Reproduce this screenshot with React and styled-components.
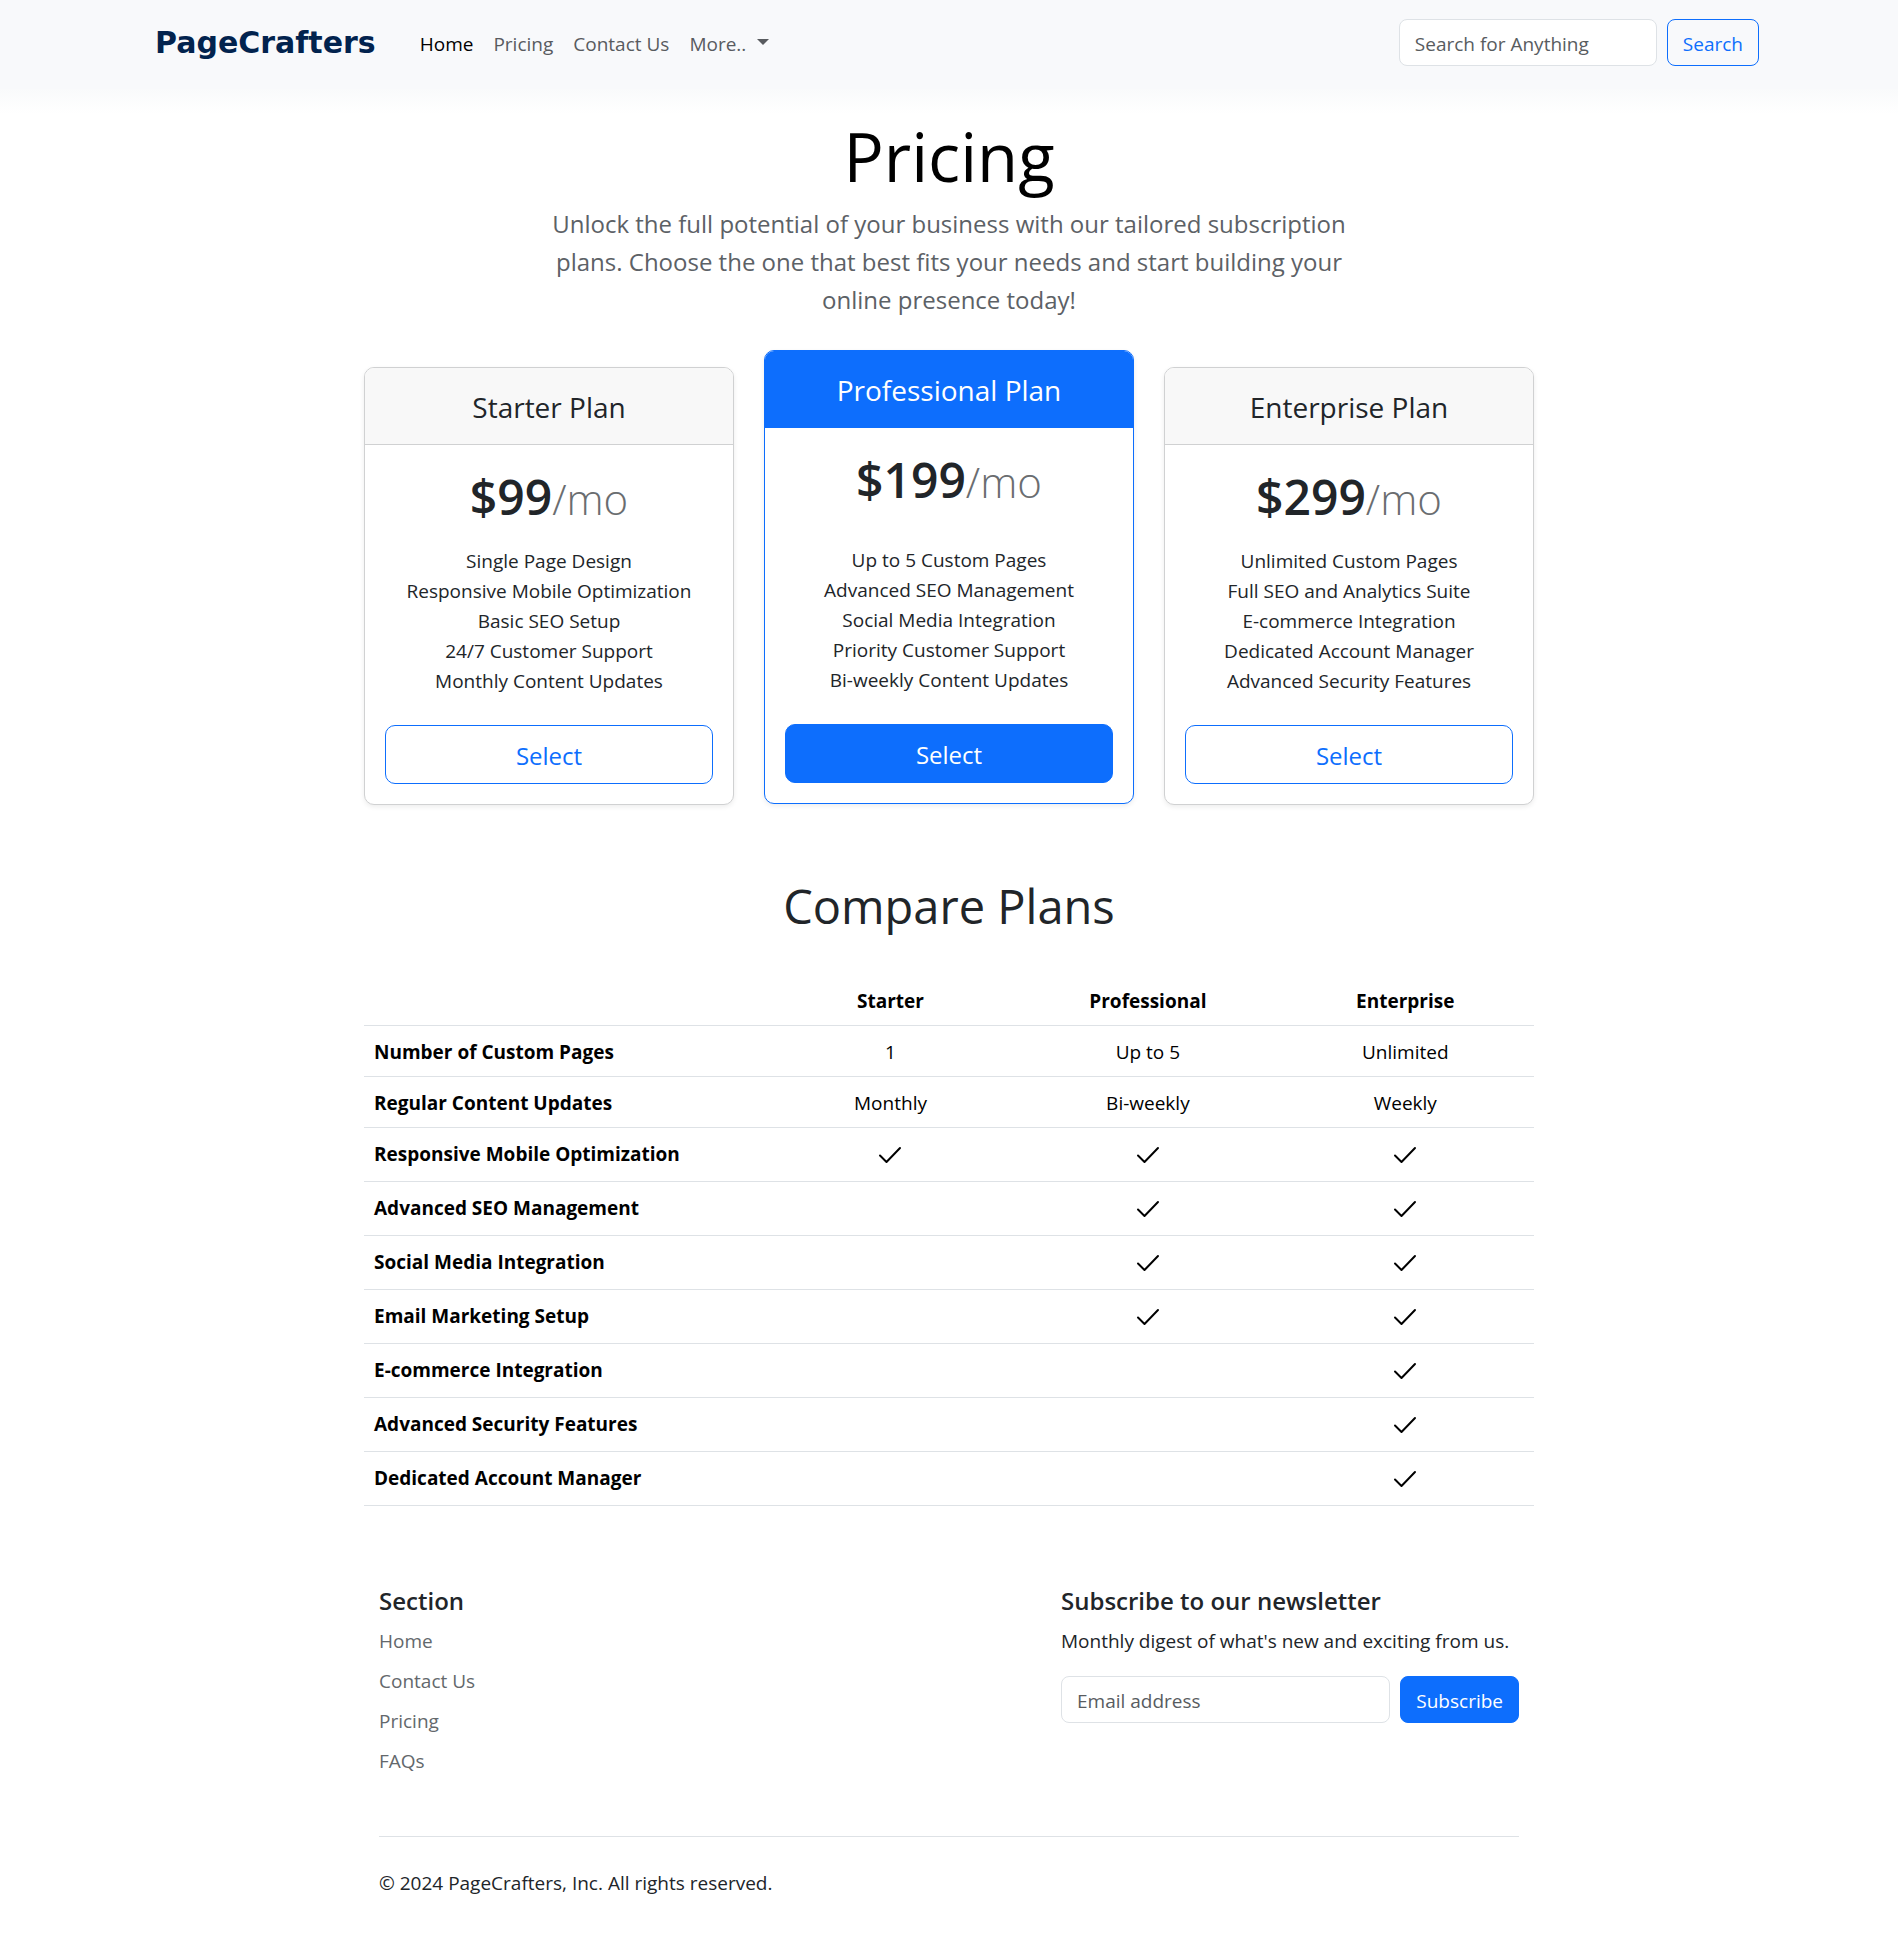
import React from "react";
import styled, { createGlobalStyle, css } from "styled-components";

const color = {
  blue: "#0d6efd",
  body: "#212529",
  muted: "#585c5f",
  line: "#dee2e6",
  cardLine: "#d0d1d2",
};

const GlobalStyle = createGlobalStyle`
  *, *::before, *::after { box-sizing: border-box; }
  body {
    margin: 0;
    background: #fff;
    color: ${color.body};
    font-family: "Segoe UI", "Open Sans", "Noto Sans", sans-serif;
    font-size: 19px;
    line-height: 30px;
  }
  h1, h2, h3, h4, h5, p, ul { margin: 0; padding: 0; }
  ul { list-style: none; }
  a { color: inherit; text-decoration: none; }
`;

const Navbar = styled.header`
  height: 89px;
  background: #f8f9fb;
`;

const NavInner = styled.nav`
  display: flex;
  align-items: flex-start;
  max-width: 1650px;
  margin: 0 auto;
  padding: 19px 15px 0;
`;

const Brand = styled.a`
  padding: 0 34px 0 16px;
  color: #02234e;
  font: bold 30px/48px "DejaVu Sans", sans-serif;
`;

const NavList = styled.ul`
  display: flex;
  flex: 1;
`;

const NavLink = styled.a`
  display: flex;
  align-items: center;
  padding: 10px;
  line-height: 30px;
  color: ${(p) => (p.$active ? "#000" : "#585b5f")};
`;

const Caret = styled.span`
  margin: 0 0 5px 11px;
  border-top: 6px solid;
  border-left: 6px solid transparent;
  border-right: 6px solid transparent;
`;

const InlineForm = styled.form`
  display: flex;
  gap: 10px;
`;

const TextField = styled.input`
  flex: 1;
  width: ${(p) => p.$width || "auto"};
  min-width: 0;
  height: 47px;
  padding: 2px 15px 0;
  border: 1px solid ${color.line};
  border-radius: 8px;
  background: #fff;
  color: ${color.body};
  font: inherit;
  &::placeholder { color: ${color.muted}; opacity: 1; }
`;

const Button = styled.button`
  padding: 2px 15px 0;
  height: 47px;
  border: 1px solid ${color.blue};
  border-radius: 8px;
  background: ${(p) => (p.$solid ? color.blue : "transparent")};
  color: ${(p) => (p.$solid ? "#fff" : color.blue)};
  font: inherit;
  cursor: pointer;
  ${(p) =>
    p.$large &&
    css`
      width: 100%;
      height: 59px;
      border-radius: 10px;
      font-size: 24px;
    `}
`;

const Fade = styled.div`
  height: 25px;
  background: linear-gradient(#f9fafb, #fff);
`;

const Container = styled.div`
  max-width: 1200px;
  margin: 0 auto;
  padding: 0 15px;
`;

const Intro = styled.section`
  display: flex;
  flex-direction: column;
  align-items: center;
  gap: 7px;
  padding-bottom: 48px;
  text-align: center;
`;

const PageTitle = styled.h1`
  color: #000;
  font-size: 67px;
  font-weight: 400;
  line-height: 84px;
`;

const Lead = styled.p`
  max-width: 820px;
  color: #5c6166;
  font-size: 24px;
  line-height: 38px;
`;

const Cards = styled.section`
  display: grid;
  grid-template-columns: repeat(3, 1fr);
  gap: 30px;
`;

const Card = styled.article`
  display: flex;
  flex-direction: column;
  overflow: hidden;
  border: 1px solid ${(p) => (p.$featured ? color.blue : color.cardLine)};
  border-radius: 10px;
  background: #fff;
  box-shadow: 0 2px 5px rgba(0, 0, 0, 0.075);
  text-align: center;
  ${(p) => p.$featured && "margin: -17px 0 1px;"}
`;

const CardHeader = styled.header`
  padding: 21px 20px 19px;
  border-bottom: 1px solid ${(p) => (p.$featured ? color.blue : color.cardLine)};
  background: ${(p) => (p.$featured ? color.blue : "#f8f8f8")};
  color: ${(p) => (p.$featured ? "#fff" : "inherit")};
`;

const PlanName = styled.h4`
  font-size: 28px;
  font-weight: 400;
  line-height: 36px;
`;

const CardBody = styled.div`
  display: flex;
  flex: 1;
  flex-direction: column;
  padding: 22px 20px 20px;
`;

const Price = styled.p`
  font-size: 48px;
  font-weight: 600;
  line-height: 60px;
  small {
    color: #6a6d70;
    font-size: 42px;
    font-weight: 300;
    line-height: 1;
  }
`;

const Features = styled.ul`
  margin: auto 0 29px;
  padding-top: 19px;
`;

const SectionTitle = styled.h2`
  margin: 71px 0 39px;
  font-size: 47px;
  font-weight: 400;
  line-height: 60px;
  text-align: center;
`;

const Table = styled.table`
  width: 100%;
  border-collapse: collapse;
  table-layout: fixed;
  color: #000;
  text-align: center;
`;

const HeadCell = styled.th`
  width: ${(p) => p.$width};
  padding: 11px 10px 9px;
  border-bottom: 1px solid ${color.line};
  font-weight: 700;
`;

const RowHead = styled(HeadCell)`
  text-align: left;
  vertical-align: top;
`;

const Cell = styled.td`
  padding: 11px 10px 9px;
  border-bottom: 1px solid ${color.line};
  vertical-align: top;
`;

const CheckIcon = styled.svg`
  display: block;
  width: 30px;
  height: 33px;
  margin: 0 auto;
`;

const Footer = styled.footer`
  padding: 80px 15px 45px;
`;

const FooterTop = styled.div`
  display: flex;
  justify-content: space-between;
  padding-bottom: 50px;
  border-bottom: 1px solid ${color.line};
`;

const FooterTitle = styled.h5`
  margin-bottom: 10px;
  font-size: 24px;
  font-weight: 600;
  line-height: 30px;
`;

const FooterLinks = styled.ul`
  color: #63686c;
  li { margin-bottom: 10px; }
`;

const Newsletter = styled.div`
  width: 458px;
  p { margin-bottom: 20px; }
`;

const Copyright = styled.p`
  padding-top: 31px;
`;

const plans = [
  {
    name: "Starter Plan",
    price: "$99",
    features: [
      "Single Page Design",
      "Responsive Mobile Optimization",
      "Basic SEO Setup",
      "24/7 Customer Support",
      "Monthly Content Updates",
    ],
  },
  {
    name: "Professional Plan",
    price: "$199",
    featured: true,
    features: [
      "Up to 5 Custom Pages",
      "Advanced SEO Management",
      "Social Media Integration",
      "Priority Customer Support",
      "Bi-weekly Content Updates",
    ],
  },
  {
    name: "Enterprise Plan",
    price: "$299",
    features: [
      "Unlimited Custom Pages",
      "Full SEO and Analytics Suite",
      "E-commerce Integration",
      "Dedicated Account Manager",
      "Advanced Security Features",
    ],
  },
];

const comparison = [
  ["Number of Custom Pages", "1", "Up to 5", "Unlimited"],
  ["Regular Content Updates", "Monthly", "Bi-weekly", "Weekly"],
  ["Responsive Mobile Optimization", true, true, true],
  ["Advanced SEO Management", false, true, true],
  ["Social Media Integration", false, true, true],
  ["Email Marketing Setup", false, true, true],
  ["E-commerce Integration", false, false, true],
  ["Advanced Security Features", false, false, true],
  ["Dedicated Account Manager", false, false, true],
];

function Check() {
  return (
    <CheckIcon viewBox="0 0 30 33" role="img" aria-label="Included">
      <path
        d="M5 16.5 L11.5 23 L25 9"
        fill="none"
        stroke="currentColor"
        strokeWidth="2"
        strokeLinecap="round"
        strokeLinejoin="round"
      />
    </CheckIcon>
  );
}

function PlanCard({ name, price, features, featured }) {
  return (
    <Card $featured={featured}>
      <CardHeader $featured={featured}>
        <PlanName>{name}</PlanName>
      </CardHeader>
      <CardBody>
        <Price>
          {price}
          <small>/mo</small>
        </Price>
        <Features>
          {features.map((f) => (
            <li key={f}>{f}</li>
          ))}
        </Features>
        <Button type="button" $large $solid={featured}>
          Select
        </Button>
      </CardBody>
    </Card>
  );
}

export default function App() {
  const stay = (e) => e.preventDefault();
  return (
    <>
      <GlobalStyle />
      <Navbar>
        <NavInner>
          <Brand href="#">PageCrafters</Brand>
          <NavList>
            <li><NavLink href="#" $active>Home</NavLink></li>
            <li><NavLink href="#">Pricing</NavLink></li>
            <li><NavLink href="#">Contact Us</NavLink></li>
            <li><NavLink href="#">More..<Caret /></NavLink></li>
          </NavList>
          <InlineForm onSubmit={stay}>
            <TextField
              type="search"
              aria-label="Search for Anything"
              $width="258px"
              placeholder="Search for Anything"
            />
            <Button type="submit">Search</Button>
          </InlineForm>
        </NavInner>
      </Navbar>
      <Fade />
      <Container>
        <Intro>
          <PageTitle>Pricing</PageTitle>
          <Lead>
            Unlock the full potential of your business with our tailored subscription plans. Choose
            the one that best fits your needs and start building your online presence today!
          </Lead>
        </Intro>
        <Cards>
          {plans.map((plan) => (
            <PlanCard key={plan.name} {...plan} />
          ))}
        </Cards>
        <SectionTitle>Compare Plans</SectionTitle>
        <Table>
          <thead>
            <tr>
              <HeadCell as="td" $width="34%" />
              <HeadCell scope="col" $width="22%">Starter</HeadCell>
              <HeadCell scope="col" $width="22%">Professional</HeadCell>
              <HeadCell scope="col" $width="22%">Enterprise</HeadCell>
            </tr>
          </thead>
          <tbody>
            {comparison.map(([label, ...values]) => (
              <tr key={label}>
                <RowHead scope="row">{label}</RowHead>
                {values.map((v, i) => (
                  <Cell key={i}>{v === true ? <Check /> : v || null}</Cell>
                ))}
              </tr>
            ))}
          </tbody>
        </Table>
        <Footer>
          <FooterTop>
            <div>
              <FooterTitle>Section</FooterTitle>
              <FooterLinks>
                <li><a href="#">Home</a></li>
                <li><a href="#">Contact Us</a></li>
                <li><a href="#">Pricing</a></li>
                <li><a href="#">FAQs</a></li>
              </FooterLinks>
            </div>
            <Newsletter>
              <FooterTitle>Subscribe to our newsletter</FooterTitle>
              <p>Monthly digest of what's new and exciting from us.</p>
              <InlineForm onSubmit={stay}>
                <TextField type="email" aria-label="Email address" placeholder="Email address" />
                <Button type="submit" $solid>Subscribe</Button>
              </InlineForm>
            </Newsletter>
          </FooterTop>
          <Copyright>© 2024 PageCrafters, Inc. All rights reserved.</Copyright>
        </Footer>
      </Container>
    </>
  );
}
